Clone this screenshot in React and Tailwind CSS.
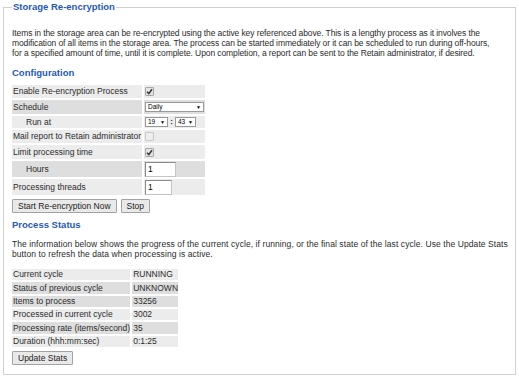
import React from 'react';

const font = { fontFamily: '"Liberation Sans", Arial, sans-serif' };

function Check({ checked, disabled }) {
  return (
    <span
      className={`inline-flex h-[9px] w-[9px] items-center justify-center rounded-[1px] border ${disabled ? 'border-[#c8c8c8] bg-[#eeeeee]' : 'border-[#a8a8a8] bg-[#e4e4e4]'}`}
    >
      {checked && (
        <svg width="7" height="7" viewBox="0 0 7 7">
          <path d="M1 3.8 L2.8 5.6 L6 1.2" stroke="#333" strokeWidth="1.5" fill="none" />
        </svg>
      )}
    </span>
  );
}

function Select({ value, width }) {
  return (
    <span
      className="inline-flex h-[10px] items-center justify-between border border-[#9a9a9a] bg-white pl-[2px] pr-[2px] text-[6.5px] leading-none text-black"
      style={{ width }}
    >
      <span>{value}</span>
      <span className="text-[5px]">▼</span>
    </span>
  );
}

function Input({ width, height }) {
  return (
    <span
      className="inline-flex items-center border border-t-[#8a8a8a] border-l-[#8a8a8a] border-r-[#c4c4c4] border-b-[#c4c4c4] bg-white pl-[2px] text-[8.5px] text-black"
      style={{ width, height }}
    >
      1
    </span>
  );
}

function Btn({ children }) {
  return (
    <button className="h-[14px] rounded-[1px] border border-[#a3a3a3] bg-[#e9e9e9] px-[5px] text-[8.5px] leading-none text-[#222]">
      {children}
    </button>
  );
}

const configRows = [
  { label: 'Enable Re-encryption Process', h: 13, dark: false, cell: <Check checked /> },
  { label: 'Schedule', h: 14, dark: true, cell: <Select value="Daily" width={59} /> },
  {
    label: 'Run at',
    h: 12,
    dark: false,
    indent: true,
    cell: (
      <span className="flex items-center">
        <Select value="19" width={23} />
        <span className="w-[7px] text-center text-[8px] font-bold">:</span>
        <Select value="43" width={21} />
      </span>
    ),
  },
  { label: 'Mail report to Retain administrator', h: 13, dark: false, cell: <Check disabled /> },
  { label: 'Limit processing time', h: 14, dark: false, cell: <Check checked /> },
  { label: 'Hours', h: 16, dark: true, indent: true, cell: <Input width={31} height={15} /> },
  { label: 'Processing threads', h: 16, dark: false, cell: <Input width={27} height={15} /> },
];

const statusRows = [
  ['Current cycle', 'RUNNING', false],
  ['Status of previous cycle', 'UNKNOWN', true],
  ['Items to process', '33256', true],
  ['Processed in current cycle', '3002', false],
  ['Processing rate (items/second)', '35', true],
  ['Duration (hhh:mm:sec)', '0:1:25', false],
];

export default function App() {
  return (
    <div className="h-[378px] w-[519px] overflow-hidden bg-white text-[8.5px] text-[#2b2b2b]" style={font}>
      <fieldset className="mx-[3px] h-[375px] border border-[#d0d0d0] pl-[8px] pr-[4px]">
        <legend className="px-[1px] text-[9.5px] font-bold leading-[14px] text-[#1f5ab5]">
          Storage Re-encryption
        </legend>

        <p className="mt-[14px] whitespace-nowrap leading-[10px] tracking-[-0.1px]">
          Items in the storage area can be re-encrypted using the active key referenced above. This is a lengthy process as it involves the
          <br />
          modification of all items in the storage area. The process can be started immediately or it can be scheduled to run during off-hours,
          <br />
          for a specified amount of time, until it is complete. Upon completion, a report can be sent to the Retain administrator, if desired.
        </p>

        <h3 className="mt-[9px] text-[9.5px] font-bold leading-[12px] text-[#1f5ab5]">Configuration</h3>

        <table className="mt-[4px] -ml-[2px] border-separate border-spacing-[2px]">
          <tbody>
            {configRows.map((r) => (
              <tr key={r.label}>
                <td
                  className={`w-[130px] whitespace-nowrap p-0 leading-none ${r.indent ? 'pl-[14px]' : 'pl-[1px]'} ${r.dark ? 'bg-[#dedede]' : 'bg-[#ececec]'}`}
                  style={{ height: r.h }}
                >
                  {r.label}
                </td>
                <td className={`w-[61px] p-0 pl-[1px] leading-none ${r.dark ? 'bg-[#dedede]' : 'bg-[#ececec]'}`}>
                  <div className="flex items-center">{r.cell}</div>
                </td>
              </tr>
            ))}
          </tbody>
        </table>

        <div className="mt-[2px] flex gap-[4px]">
          <Btn>Start Re-encryption Now</Btn>
          <Btn>Stop</Btn>
        </div>

        <h3 className="mt-[6px] text-[9.5px] font-bold leading-[12px] text-[#1f5ab5]">Process Status</h3>

        <p className="mt-[8px] whitespace-nowrap leading-[10px] tracking-[0.08px]">
          The information below shows the progress of the current cycle, if running, or the final state of the last cycle. Use the Update Stats
          <br />
          button to refresh the data when processing is active.
        </p>

        <table className="mt-[8px] -ml-[2px] border-separate border-spacing-[2px]">
          <tbody>
            {statusRows.map(([k, v, dark]) => (
              <tr key={k}>
                <td className={`h-[11.33px] w-[117px] whitespace-nowrap p-0 pl-[1px] leading-none ${dark ? 'bg-[#dedede]' : 'bg-[#ececec]'}`}>{k}</td>
                <td className={`w-[42px] p-0 pl-[1px] leading-none ${dark ? 'bg-[#dedede]' : 'bg-[#ececec]'}`}>{v}</td>
              </tr>
            ))}
          </tbody>
        </table>

        <div className="mt-[2px]">
          <Btn>Update Stats</Btn>
        </div>
      </fieldset>
    </div>
  );
}
